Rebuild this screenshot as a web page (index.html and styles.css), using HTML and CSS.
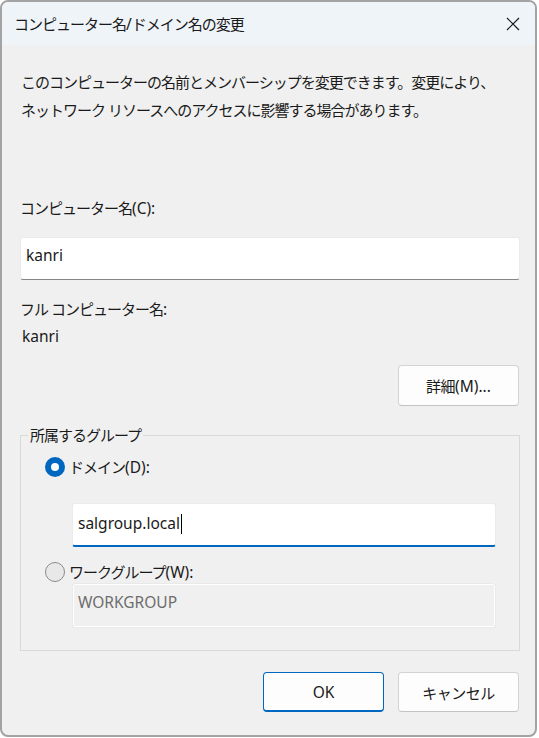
FILE: index.html
```html
<!DOCTYPE html>
<html lang="ja">
<head>
<meta charset="utf-8">
<title>コンピューター名/ドメイン名の変更</title>
<link rel="stylesheet" href="styles.css">
</head>
<body>
<div class="window">
  <div class="titlebar">
    <span class="title">コンピューター名<span class="en">/</span>ドメイン名の変更</span>
    <span class="close">
      <svg width="14" height="14" viewBox="0 0 14 14"><path d="M1 1 L13 13 M13 1 L1 13" stroke="#1b1b1b" stroke-width="1.2" fill="none"/></svg>
    </span>
  </div>
  <div class="content">
    <p class="desc">このコンピューターの名前とメンバーシップを変更できます。変更により、<br>ネットワーク リソースへのアクセスに影響する場合があります。</p>
    <div class="label label-c">コンピューター名<span class="en">(C):</span></div>
    <div class="textbox tb-name">kanri</div>
    <div class="label label-full">フル コンピューター名<span class="en">:</span></div>
    <div class="value">kanri</div>
    <div class="row-right row-details">
      <button class="btn">詳細<span class="en">(M)...</span></button>
    </div>
    <fieldset class="group">
      <legend class="legend">所属するグループ</legend>
      <div class="radio-row r1">
        <span class="radio checked"></span>
        <span class="rlabel">ドメイン<span class="en">(D):</span></span>
      </div>
      <div class="textbox tb-domain focused">salgroup.local<span class="caret"></span></div>
      <div class="radio-row r2">
        <span class="radio"></span>
        <span class="rlabel">ワークグループ<span class="en">(W):</span></span>
      </div>
      <div class="textbox tb-work disabled">WORKGROUP</div>
    </fieldset>
    <div class="row-right row-actions">
      <button class="btn btn-default"><span class="en">OK</span></button>
      <button class="btn">キャンセル</button>
    </div>
  </div>
</div>
</body>
</html>
```
FILE: styles.css
```css
html, body {
  margin: 0;
  padding: 0;
  background: #ffffff;
}
body {
  font-family: "Noto Sans", "Noto Sans CJK JP", sans-serif;
  font-size: 15px;
  color: #1a1a1a;
}
.en {
  letter-spacing: 0;
  font-size: 15.5px;
}
.window {
  box-sizing: border-box;
  width: 537px;
  height: 737px;
  border: 2px solid #a3a3a3;
  border-radius: 8px;
  background: #f0f0f0;
  overflow: hidden;
  display: flex;
  flex-direction: column;
}
.titlebar {
  height: 43px;
  flex: none;
  background: #eff4f9;
  display: flex;
  align-items: center;
  justify-content: space-between;
  padding: 0 15px 0 12px;
}
.title {
  font-size: 15px;
  letter-spacing: -1px;
  line-height: 20px;
  color: #1a1a1a;
}
.close {
  display: flex;
  width: 14px;
  height: 14px;
}
.content {
  display: flex;
  flex-direction: column;
  padding: 0 15px 0 18px;
}
.desc {
  margin: 23px 0 0 0;
  line-height: 28px;
  letter-spacing: -1px;
  padding-left: 1px;
}
.label, .value {
  line-height: 24px;
  letter-spacing: -1px;
}
.label-c {
  margin-top: 72px;
}
.textbox {
  box-sizing: border-box;
  background: #ffffff;
  border: 1px solid #ebebeb;
  border-bottom: 1px solid #868686;
  border-radius: 3px;
  line-height: 20px;
  padding: 7px 5px 0 5px;
  color: #1a1a1a;
  font-size: 15.5px;
}
.tb-name {
  margin-top: 17px;
  height: 43px;
}
.label-full {
  margin-top: 17px;
}
.value {
  margin-top: 3px;
  padding-left: 2px;
  letter-spacing: 0;
  font-size: 15.5px;
}
.row-right {
  display: flex;
  justify-content: flex-end;
  gap: 14px;
  padding-right: 1px;
}
.row-details {
  margin-top: 17px;
}
.btn {
  box-sizing: border-box;
  width: 121px;
  height: 41px;
  background: #fdfdfd;
  border: 1px solid #d3d3d3;
  border-bottom-color: #c3c3c3;
  border-radius: 4px;
  font-family: "Noto Sans", "Noto Sans CJK JP", sans-serif;
  font-size: 15px;
  letter-spacing: -0.5px;
  color: #1a1a1a;
  padding: 0;
}
.btn-default {
  border: 1px solid #0067c0;
  border-bottom-width: 2px;
}
.group {
  margin: 19px 0 0 0;
  border: 1px solid #d9d9d9;
  border-radius: 0;
  padding: 0 23px 23px 24px;
  min-width: 0;
}
.legend {
  margin-left: -17px;
  padding: 0 2px;
  line-height: 20px;
  letter-spacing: -1px;
}
.radio-row {
  display: flex;
  align-items: center;
  gap: 4px;
  height: 24px;
}
.r1 {
  margin-top: 10px;
}
.r2 {
  margin-top: 13px;
}
.radio {
  box-sizing: border-box;
  width: 20px;
  height: 20px;
  border-radius: 50%;
  border: 1px solid #8b8b8b;
  background: #e8e8e8;
  flex: none;
  display: flex;
  align-items: center;
  justify-content: center;
}
.radio.checked {
  border: none;
  background: #0067c0;
}
.radio.checked::after {
  content: "";
  width: 8px;
  height: 8px;
  border-radius: 50%;
  background: #ffffff;
}
.rlabel {
  line-height: 24px;
  letter-spacing: -1px;
}
.tb-domain {
  margin: 24px 0 0 27px;
  height: 44px;
  padding-top: 9px;
  border-bottom: 2px solid #0067c0;
  display: flex;
  align-items: flex-start;
}
.caret {
  display: inline-block;
  width: 0;
  height: 20px;
  border-left: 1px solid #000000;
  margin-left: 1px;
  margin-top: 1px;
}
.tb-work {
  margin: 0 1px 0 28px;
  height: 43px;
  background: #f0f0f0;
  border: 1px solid #ffffff;
  border-radius: 2px;
  box-shadow: 0 0 0 0.5px #e2e2e2;
  color: #6d6d6d;
  padding-left: 4px;
}
.row-actions {
  margin-top: 21px;
}
.row-actions .btn {
  height: 40px;
}
```
